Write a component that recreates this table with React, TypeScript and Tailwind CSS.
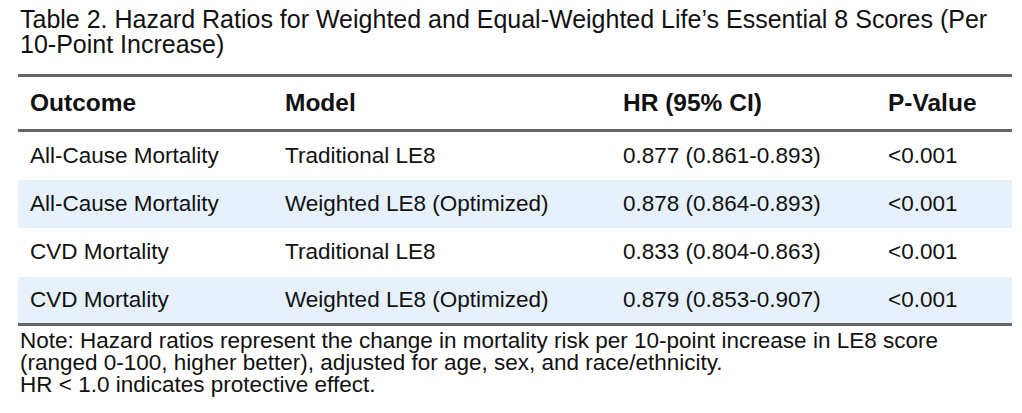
const rows = [
  { outcome: "All-Cause Mortality", model: "Traditional LE8", hr: "0.877 (0.861-0.893)", p: "<0.001" },
  { outcome: "All-Cause Mortality", model: "Weighted LE8 (Optimized)", hr: "0.878 (0.864-0.893)", p: "<0.001" },
  { outcome: "CVD Mortality", model: "Traditional LE8", hr: "0.833 (0.804-0.863)", p: "<0.001" },
  { outcome: "CVD Mortality", model: "Weighted LE8 (Optimized)", hr: "0.879 (0.853-0.907)", p: "<0.001" },
];

export default function App() {
  return (
    <div className="w-[1022px] h-[413px] bg-white text-[#111] px-[18px] font-['Liberation_Sans',Arial,sans-serif] overflow-hidden">
      <h2 className="pt-[7px] pl-[2px] text-[25px] leading-[25px] font-normal">
        Table 2. Hazard Ratios for Weighted and Equal-Weighted Life’s Essential 8 Scores (Per
        <br />
        10-Point Increase)
      </h2>

      <table className="mt-[17px] w-[994px] table-fixed border-collapse">
        <colgroup>
          <col className="w-[255px]" />
          <col className="w-[338px]" />
          <col className="w-[265px]" />
          <col className="w-[136px]" />
        </colgroup>
        <thead>
          <tr className="h-[55px] border-y-[3px] border-[#666]">
            <th className="pl-3 text-left text-[24.5px] font-bold">Outcome</th>
            <th className="pl-3 text-left text-[24.5px] font-bold">Model</th>
            <th className="pl-3 text-left text-[24.5px] font-bold">HR (95% CI)</th>
            <th className="pl-3 text-left text-[24.5px] font-bold">P-Value</th>
          </tr>
        </thead>
        <tbody className="border-b-[3px] border-[#666]">
          {rows.map((r, i) => (
            <tr key={i} className={i % 2 === 1 ? "h-[48px] bg-[#e6f1fb]" : "h-[49px] bg-white"}>
              <td className="pl-3 text-[22.5px]">{r.outcome}</td>
              <td className="pl-3 text-[22.5px]">{r.model}</td>
              <td className="pl-3 text-[22.5px]">{r.hr}</td>
              <td className="pl-3 text-[22.5px]">{r.p}</td>
            </tr>
          ))}
        </tbody>
      </table>

      <p className="mt-[4px] pl-[2px] text-[22.5px] leading-[22px]">
        Note: Hazard ratios represent the change in mortality risk per 10-point increase in LE8 score
        <br />
        (ranged 0-100, higher better), adjusted for age, sex, and race/ethnicity.
        <br />
        HR &lt; 1.0 indicates protective effect.
      </p>
    </div>
  );
}
